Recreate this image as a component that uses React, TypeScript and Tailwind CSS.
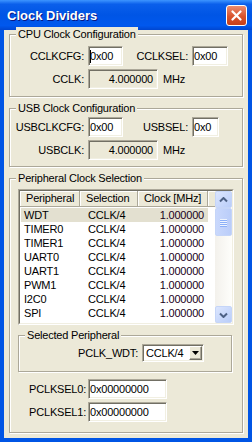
import React from "react";

// classic 3D borders used by XP dialogs
const sunken =
    "border border-t-[#ACA899] border-l-[#ACA899] border-r-white border-b-white shadow-[inset_1px_1px_0_#716F64,inset_-1px_-1px_0_#F1EFE2] p-px";
const raised =
    "border border-t-white border-l-white border-r-[#716F64] border-b-[#716F64] shadow-[inset_-1px_-1px_0_#ACA899]";

const rows = ["WDT", "TIMER0", "TIMER1", "UART0", "UART1", "PWM1", "I2C0", "SPI"];

type GroupProps = { title: string; className?: string; children: React.ReactNode };

const Group = ({ title, className, children }: GroupProps) => (
    <div className={`relative border border-[#ACA899] shadow-[inset_1px_1px_0_#fff,1px_1px_0_#fff] ${className ?? ""}`}>
        <span className="absolute -top-[8px] left-[6px] bg-[#ECE9D8] px-[2px] leading-[14px]">{title}</span>
        {children}
    </div>
);

const Input = ({ value, w, caret }: { value: string; w: string; caret?: boolean }) => (
    <div className={`${w} h-[20px] bg-white flex items-center pl-[1px] ${sunken}`}>
        {caret && <span className="w-px h-[13px] bg-black -mr-px" />}
        <span>{value}</span>
    </div>
);

const ReadOnly = ({ value }: { value: string }) => (
    <div className={`w-[70px] h-[20px] flex items-center justify-end pr-[4px] ${sunken}`}>{value}</div>
);

const Chevron = ({ down }: { down?: boolean }) => (
    <svg width="9" height="6" viewBox="0 0 9 6">
        <path
            d={down ? "M1 1.5 L4.5 5 L8 1.5" : "M1 4.5 L4.5 1 L8 4.5"}
            fill="none"
            stroke="#4D6185"
            strokeWidth="2"
        />
    </svg>
);

const ScrollButton = ({ down }: { down?: boolean }) => (
    <div className="h-[17px] rounded-[2px] border border-[#C5D5F8] bg-[linear-gradient(135deg,#DCE6FE,#B9CDF9)] flex items-center justify-center">
        <Chevron down={down} />
    </div>
);

export default function App() {
    return (
        <div className="w-[252px] h-[442px] flex flex-col bg-[#0055E5] font-['Liberation_Sans',Arial,sans-serif] text-[11px] text-black tracking-[-0.2px]">
            {/* title bar */}
            <div className="h-[30px] shrink-0 flex items-center justify-between pl-[7px] pr-[5px] pt-[1px] bg-[linear-gradient(180deg,#3D95FF_0%,#0A5FEB_14%,#0055E5_50%,#0058EE_85%,#0046D0_100%)]">
                <span className="font-bold text-[13px] tracking-normal text-white [text-shadow:1px_1px_0_#0A1883]">
                    Clock Dividers
                </span>
                <div className="w-[21px] h-[21px] rounded-[3px] border border-white bg-[linear-gradient(180deg,#EB8C70,#D9532D_55%,#C63F1A)] flex items-center justify-center">
                    <svg width="11" height="11" viewBox="0 0 11 11">
                        <path d="M1.5 1.5 L9.5 9.5 M9.5 1.5 L1.5 9.5" stroke="#fff" strokeWidth="2.2" strokeLinecap="round" />
                    </svg>
                </div>
            </div>

            {/* dialog body */}
            <div className="mx-[4px] mb-[4px] flex-1 bg-[#ECE9D8] px-[5px] pt-[4px] flex flex-col">
                <Group title="CPU Clock Configuration" className="pt-[11px] pb-[7px] flex flex-col gap-[3px]">
                    <div className="flex items-center">
                        <span className="w-[74px] text-right">CCLKCFG:</span>
                        <span className="w-[4px]" />
                        <Input value="0x00" w="w-[35px]" caret />
                        <span className="w-[65px] text-right">CCLKSEL:</span>
                        <span className="w-[4px]" />
                        <Input value="0x00" w="w-[36px]" />
                    </div>
                    <div className="flex items-center">
                        <span className="w-[74px] text-right">CCLK:</span>
                        <span className="w-[4px]" />
                        <ReadOnly value="4.000000" />
                        <span className="ml-[5px]">MHz</span>
                    </div>
                </Group>

                <Group title="USB Clock Configuration" className="mt-[11px] pt-[8px] pb-[6px] flex flex-col gap-[3px]">
                    <div className="flex items-center">
                        <span className="w-[74px] text-right">USBCLKCFG:</span>
                        <span className="w-[4px]" />
                        <Input value="0x00" w="w-[35px]" />
                        <span className="w-[65px] text-right">USBSEL:</span>
                        <span className="w-[4px]" />
                        <Input value="0x0" w="w-[27px]" />
                    </div>
                    <div className="flex items-center">
                        <span className="w-[74px] text-right">USBCLK:</span>
                        <span className="w-[4px]" />
                        <ReadOnly value="4.000000" />
                        <span className="ml-[5px]">MHz</span>
                    </div>
                </Group>

                <Group title="Peripheral Clock Selection" className="mt-[11px] pt-[10px] pb-[10px] flex flex-col">
                    {/* list view */}
                    <div className="mx-[8px] h-[136px] border border-t-[#ACA899] border-l-[#ACA899] border-r-white border-b-white">
                        <div className="h-full flex border border-t-[#716F64] border-l-[#716F64] border-r-[#F1EFE2] border-b-[#F1EFE2] bg-white">
                            <div className="flex-1 flex flex-col">
                                <div className="h-[16px] flex bg-[#ECE9D8]">
                                    {[
                                        ["Peripheral", "w-[60px]"],
                                        ["Selection", "w-[58px]"],
                                        ["Clock [MHz]", "w-[70px]"],
                                    ].map(([t, w]) => (
                                        <div
                                            key={t}
                                            className={`${w} pl-[6px] leading-[14px] border-r border-b border-r-[#ACA899] border-b-[#ACA899] shadow-[inset_1px_1px_0_#fff]`}
                                        >
                                            {t}
                                        </div>
                                    ))}
                                    <div className="flex-1 border-b border-b-[#ACA899] shadow-[inset_1px_1px_0_#fff]" />
                                </div>
                                <div className="pt-[1px] flex flex-col">
                                    {rows.map((r, i) => (
                                        <div
                                            key={r}
                                            className={`ml-[1px] w-[187px] h-[14px] flex items-center leading-[14px] ${
                                                i === 0 ? "bg-[#E3E0D0]" : ""
                                            }`}
                                        >
                                            <span className="w-[67px] pl-[3px]">{r}</span>
                                            <span className="w-[60px]">CCLK/4</span>
                                            <span className="flex-1 text-right pr-[4px] text-[#200020]">1.000000</span>
                                        </div>
                                    ))}
                                </div>
                            </div>
                            {/* scrollbar */}
                            <div className="w-[17px] flex flex-col bg-[linear-gradient(90deg,#F3F1EC,#FEFEFB)]">
                                <ScrollButton />
                                <div className="h-[28px] rounded-[2px] border border-[#C5D5F8] bg-[linear-gradient(90deg,#C9D8FC,#BACDF9)] flex flex-col items-center justify-center gap-[1px]">
                                    {[0, 1, 2, 3].map(n => (
                                        <span key={n} className="w-[7px] h-px bg-[#EEF4FE] shadow-[0_1px_0_#8CB0F8]" />
                                    ))}
                                </div>
                                <div className="flex-1" />
                                <ScrollButton down />
                            </div>
                        </div>
                    </div>

                    <Group title="Selected Peripheral" className="mt-[10px] ml-[8px] mr-[10px] pt-[8px] pb-[9px]">
                        <div className="flex items-center justify-end gap-[4px] pr-[27px]">
                            <span>PCLK_WDT:</span>
                            <div className={`w-[62px] h-[18px] bg-white flex items-center ${sunken}`}>
                                <span className="flex-1 pl-[2px]">CCLK/4</span>
                                <div className={`w-[13px] h-[14px] bg-[#ECE9D8] flex items-center justify-center ${raised}`}>
                                    <svg width="7" height="4" viewBox="0 0 7 4">
                                        <path d="M0 0 H7 L3.5 4 Z" fill="#000" />
                                    </svg>
                                </div>
                            </div>
                        </div>
                    </Group>

                    <div className="mt-[7px] flex flex-col gap-[3px]">
                        <div className="flex items-center gap-[2px]">
                            <span className="w-[76px] text-right">PCLKSEL0:</span>
                            <Input value="0x00000000" w="w-[79px]" />
                        </div>
                        <div className="flex items-center gap-[2px]">
                            <span className="w-[76px] text-right">PCLKSEL1:</span>
                            <Input value="0x00000000" w="w-[79px]" />
                        </div>
                    </div>
                </Group>
            </div>
        </div>
    );
}
